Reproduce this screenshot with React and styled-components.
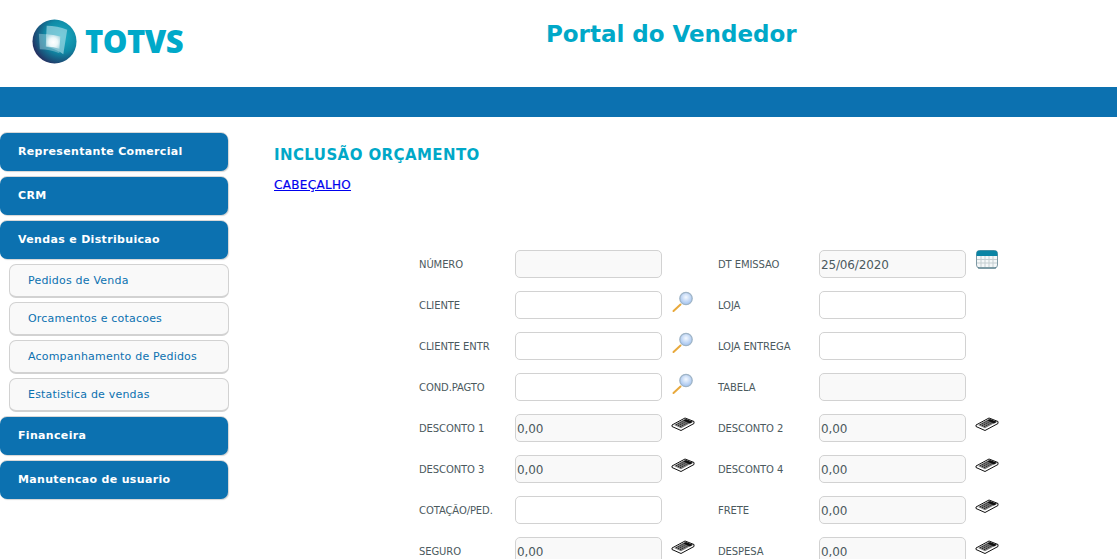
import React from "react";
import styled, { createGlobalStyle } from "styled-components";

const Global = createGlobalStyle`
  html, body { margin: 0; padding: 0; background: #fff; height: 559px; overflow: hidden; }
  #root { height: 559px; overflow: hidden; }
`;
const Page = styled.div`
  width: 1117px; height: 559px; overflow: hidden;
  font-family: "DejaVu Sans", Verdana, sans-serif;
`;
const Header = styled.header`
  height: 87px; display: flex; align-items: flex-start;
`;
const LogoWrap = styled.div`
  width: 546px; height: 87px; box-sizing: border-box; padding: 19px 0 0 32px;
  display: flex; align-items: flex-start; gap: 8px; flex: none;
`;
const LogoText = styled.span`
  font-family: "Open Sans", sans-serif; font-weight: 800; font-size: 31px; line-height: 44px;
  color: #00a9c9; letter-spacing: -0.5px;
`;
const SiteTitle = styled.h1`
  margin: 19px 0 0; font-size: 23px; line-height: 30px; font-weight: 700; color: #00a8c8;
  white-space: nowrap; letter-spacing: -0.02px;
`;
const Band = styled.div`height: 30px; background: #0c71b0;`;
const Body = styled.div`display: flex; padding-top: 16px;`;
const Side = styled.nav`
  width: 229px; flex: none; display: flex; flex-direction: column; gap: 6px;
`;
const MenuItem = styled.a`
  display: flex; align-items: center; height: 38px; box-sizing: border-box; padding: 0 0 2px 18px;
  margin-right: 1px;
  background: #0c71b0; border-radius: 7px; color: #fff; font-size: 11px; font-weight: 700;
  letter-spacing: 0.33px; box-shadow: 1px 1px 1px #d4d4d4, 0 -1px 0 #d8d8d8;
`;
const SubList = styled.div`
  display: flex; flex-direction: column; gap: 4px; padding-left: 9px; margin: -1px 0;
`;
const SubItem = styled.a`
  display: flex; align-items: center; height: 34px; box-sizing: border-box; padding: 0 0 0 18px;
  background: #f9f9f9; border: 1px solid #d2d2d2; border-bottom-width: 2px; border-radius: 7px;
  color: #0c71b0; font-size: 11px; letter-spacing: 0.2px;
`;
const Main = styled.main`padding: 13px 0 0 45px; flex: 1;`;
const Title = styled.h2`
  margin: 0; font-size: 15px; line-height: 18px; font-weight: 700; color: #00a8c8;
  letter-spacing: 0.41px; white-space: nowrap;
`;
const SectionLink = styled.a`
  display: block; margin-top: 14px; font-size: 12px; line-height: 15px; color: #0000ee;
  text-decoration: underline; letter-spacing: 0.32px; -webkit-text-stroke: 0.2px #0000ee;
`;
const Form = styled.div`
  margin: 57px 0 0 145px; display: grid; grid-template-columns: 299px 300px; row-gap: 13px;
`;
const Field = styled.div`display: flex; align-items: flex-start; height: 28px;`;
const Label = styled.label`
  width: ${p => (p.$wide ? 101 : 96)}px; flex: none; font-size: 10px; line-height: 28px; color: #4c5a5e;
  white-space: nowrap; letter-spacing: -0.1px; padding-top: 1px;
`;
const Input = styled.input`
  width: 147px; height: 28px; box-sizing: border-box; flex: none; padding: 1px 1px 0; margin: 0;
  border: 1px solid #d2d2d2; border-radius: 5px; outline: none;
  background: ${p => (p.$filled ? "#f9f9f9" : "#fff")};
  color: #4c5a5e; font: 12px "DejaVu Sans", sans-serif; letter-spacing: -0.15px;
`;
const Tool = styled.span`
  display: block; margin-left: ${p => p.$x}px; margin-top: ${p => p.$y}px; line-height: 0; flex: none;
`;

const Logo = () => (
  <svg width="45" height="45" viewBox="0 0 46 46">
    <defs>
      <radialGradient id="ball" cx="0.66" cy="0.38" r="0.74">
        <stop offset="0" stopColor="#1aaec3" />
        <stop offset="0.5" stopColor="#0f8aa6" />
        <stop offset="0.8" stopColor="#1b4f78" />
        <stop offset="1" stopColor="#2b1f55" />
      </radialGradient>
      <radialGradient id="glow" cx="0.5" cy="0.55" r="0.6">
        <stop offset="0" stopColor="#ffffff" />
        <stop offset="0.5" stopColor="#ecf7f9" />
        <stop offset="1" stopColor="#a6d6e0" />
      </radialGradient>
    </defs>
    <circle cx="23" cy="23" r="22.5" fill="url(#ball)" />
    <path d="M15 7 Q26 7 36 11 L32 36 Q24 30 14 28 Z" fill="#a9dbe6" opacity="0.65" />
    <path d="M7 15 Q18 15 29 18 L28 35 Q18 31 8 31 Z" fill="#8fc3d2" opacity="0.55" />
    <path d="M14.5 15.5 Q22 16 29 18 L28 30.5 Q22 28.5 14.5 28 Z" fill="url(#glow)" />
  </svg>
);

const Magnifier = () => (
  <svg width="22" height="22" viewBox="0 0 22 22">
    <defs>
      <radialGradient id="lens" cx="0.5" cy="0.4" r="0.6">
        <stop offset="0" stopColor="#f4f9ff" />
        <stop offset="1" stopColor="#9fc0ee" />
      </radialGradient>
    </defs>
    <path d="M1.5 20 L8.5 13.5" stroke="#e8a93c" strokeWidth="2" strokeLinecap="round" />
    <circle cx="14" cy="7.5" r="6.2" fill="url(#lens)" stroke="#9fb4c6" strokeWidth="1.3" />
  </svg>
);

const Calendar = () => (
  <svg width="22" height="19" viewBox="0 0 22 19">
    <rect x="0.5" y="0.5" width="21" height="17.5" rx="3" fill="#f4f7f8" stroke="#7f9aa5" />
    <path d="M0.5 6 V3.5 a3 3 0 0 1 3-3 h15 a3 3 0 0 1 3 3 V6 Z" fill="#0a84a4" />
    <path d="M1 9.5 H21 M1 13 H21 M5 6 V17 M9 6 V17 M13 6 V17 M17 6 V17" stroke="#c4ced1" strokeWidth="1" />
    <path d="M2 18 H20" stroke="#3d6a7a" strokeWidth="1" />
  </svg>
);

const Calc = () => (
  <svg width="24" height="14" viewBox="0 0 24 14">
    <path d="M1 8 L14 1 L23 4.5 L23 6.5 L10 13.5 L1 9.5 Z" fill="#fff" stroke="#111" strokeWidth="1" strokeLinejoin="round" />
    <path d="M3 8 L14 2 L21.5 5 L10 11.2 Z" fill="#777" />
    <path d="M5 7.7 L14 3 M7 8.7 L16 4 M9 9.7 L18 5" stroke="#222" strokeWidth="1" strokeDasharray="1.2 0.9" />
    <path d="M15 2 L22 4.8 L19 6.4 L12.5 3.4 Z" fill="#111" />
  </svg>
);

const tools = {
  search: <Tool $x={10} $y={0}><Magnifier /></Tool>,
  cal: <Tool $x={10} $y={0}><Calendar /></Tool>,
  calc: <Tool $x={9} $y={3}><Calc /></Tool>,
};

const rows = [
  ["NÚMERO", "", true, null],
  ["DT EMISSAO", "25/06/2020", true, "cal"],
  ["CLIENTE", "", false, "search"],
  ["LOJA", "", false, null],
  ["CLIENTE ENTR", "", false, "search"],
  ["LOJA ENTREGA", "", false, null],
  ["COND.PAGTO", "", false, "search"],
  ["TABELA", "", true, null],
  ["DESCONTO 1", "0,00", true, "calc"],
  ["DESCONTO 2", "0,00", true, "calc"],
  ["DESCONTO 3", "0,00", true, "calc"],
  ["DESCONTO 4", "0,00", true, "calc"],
  ["COTAÇÃO/PED.", "", false, null],
  ["FRETE", "0,00", true, "calc"],
  ["SEGURO", "0,00", true, "calc"],
  ["DESPESA", "0,00", true, "calc"],
];

export default function App() {
  return (
    <Page>
      <Global />
      <Header>
        <LogoWrap>
          <Logo />
          <LogoText>TOTVS</LogoText>
        </LogoWrap>
        <SiteTitle>Portal do Vendedor</SiteTitle>
      </Header>
      <Band />
      <Body>
        <Side>
          <MenuItem>Representante Comercial</MenuItem>
          <MenuItem>CRM</MenuItem>
          <MenuItem>Vendas e Distribuicao</MenuItem>
          <SubList>
            <SubItem>Pedidos de Venda</SubItem>
            <SubItem>Orcamentos e cotacoes</SubItem>
            <SubItem>Acompanhamento de Pedidos</SubItem>
            <SubItem>Estatistica de vendas</SubItem>
          </SubList>
          <MenuItem>Financeira</MenuItem>
          <MenuItem>Manutencao de usuario</MenuItem>
        </Side>
        <Main>
          <Title>INCLUSÃO ORÇAMENTO</Title>
          <SectionLink href="#">CABEÇALHO</SectionLink>
          <Form>
            {rows.map(([label, value, filled, tool], i) => (
              <Field key={label}>
                <Label $wide={i % 2 === 1}>{label}</Label>
                <Input $filled={filled} defaultValue={value} readOnly />
                {tool && tools[tool]}
              </Field>
            ))}
          </Form>
        </Main>
      </Body>
    </Page>
  );
}
